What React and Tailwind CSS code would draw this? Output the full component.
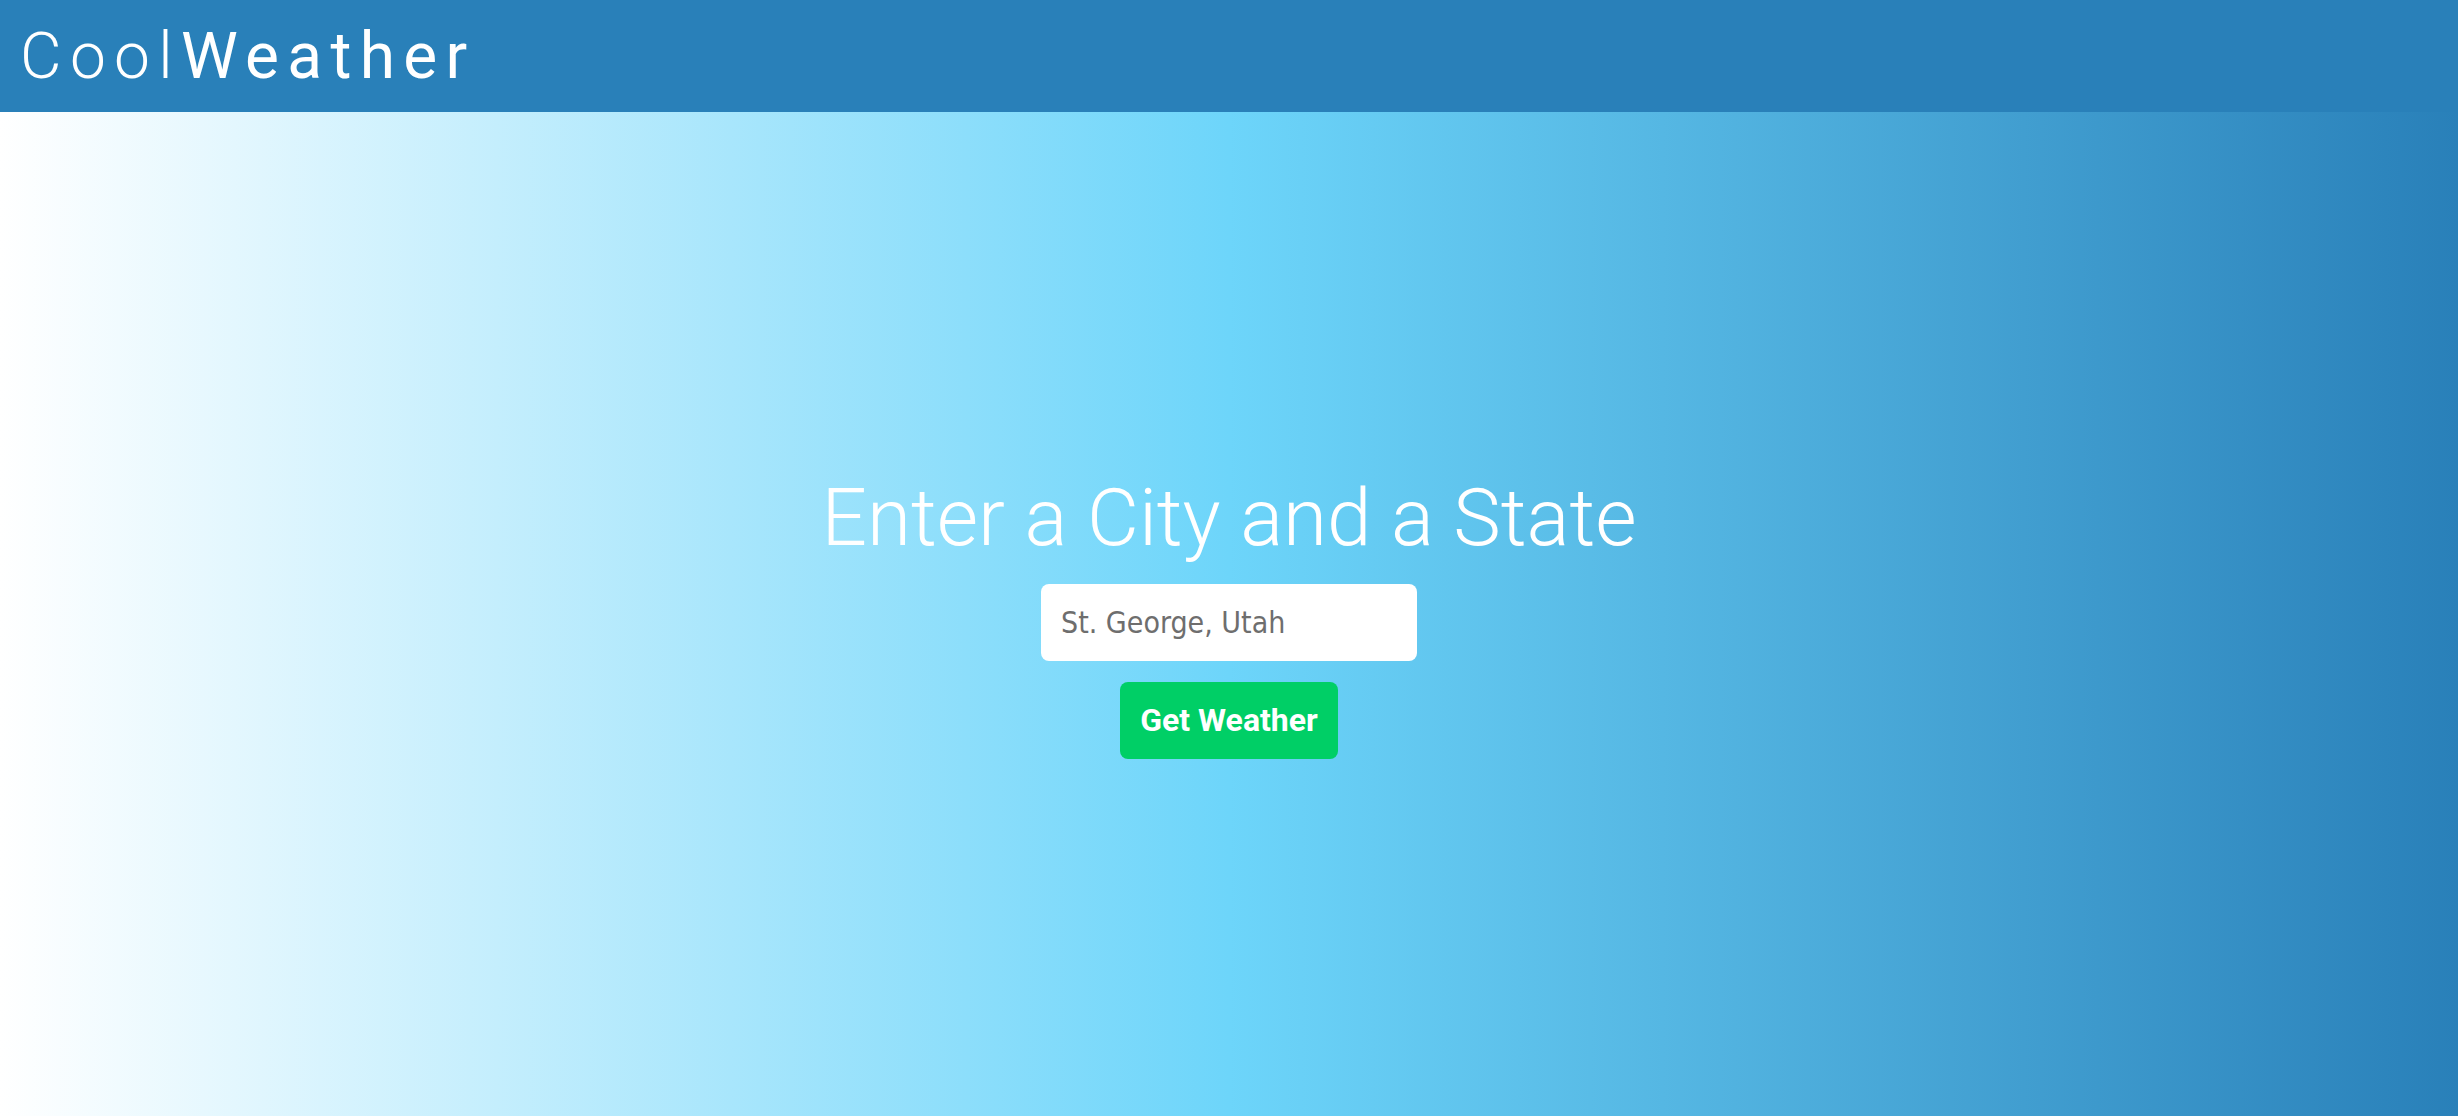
export default function App() {
  return (
    <div className="min-h-screen bg-white" style={{ fontFamily: "Roboto, sans-serif" }}>
      <header className="h-[112px] bg-[#2980b9] flex items-center px-[20px]">
        <h1 className="text-[64px] leading-none text-white tracking-[0.13em] pt-[2px]">
          <span className="font-light">Cool</span>
          <span className="font-normal">Weather</span>
        </h1>
      </header>

      <main className="h-[1004px] bg-[linear-gradient(to_left,#2980b9,#6dd5fa,#ffffff)] flex flex-col items-center justify-center pt-[8px]">
        <h2 className="text-[80px] font-light text-white leading-none mb-[26px]">Enter a City and a State</h2>
        <input
          type="text"
          placeholder="St. George, Utah"
          className="w-[376px] h-[77px] rounded-[8px] bg-white px-[20px] text-[30px] text-[#555] placeholder:text-[#6e6e6e] outline-none font-['DejaVu_Sans_Condensed',Tahoma,sans-serif]"
        />
        <button className="mt-[21px] w-[218px] h-[77px] rounded-[8px] bg-[#00cf66] text-white text-[32px] font-bold">
          Get Weather
        </button>
      </main>
    </div>
  );
}
